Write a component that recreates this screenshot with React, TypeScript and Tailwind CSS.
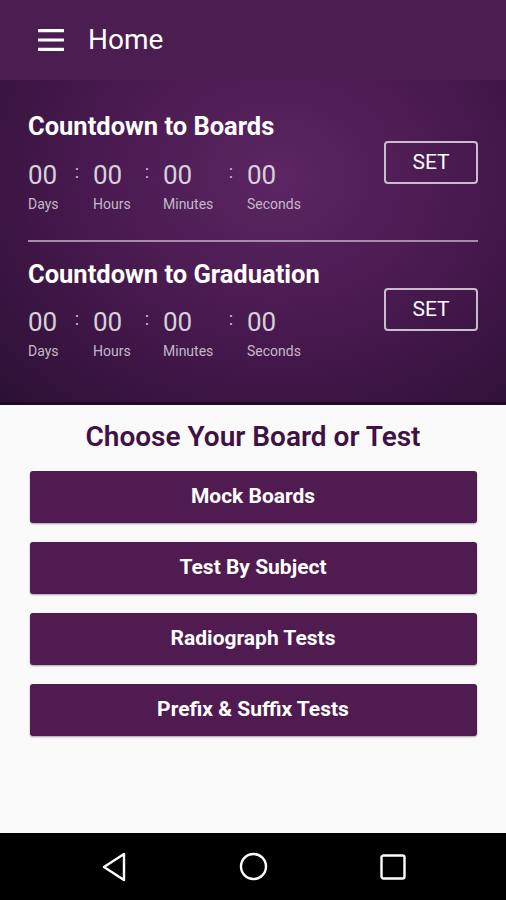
const units = [
  { label: "Days", w: "w-[65px]" },
  { label: "Hours", w: "w-[70px]" },
  { label: "Minutes", w: "w-[84px]" },
  { label: "Seconds", w: "w-[70px]" },
];

function Countdown({ title }: { title: string }) {
  return (
    <div className="flex items-center justify-between">
      <div>
        <h2 className="text-[25.5px] font-bold text-white leading-none">{title}</h2>
        <div className="flex mt-[22px]">
          {units.map((u, i) => (
            <div key={u.label} className={`${u.w} flex flex-col`}>
              <div className="flex items-center text-[26px] leading-none text-[#d8d0dc]">
                <span>00</span>
                {i < 3 && (
                  <span className="ml-auto mr-[14px] text-[18px] -mt-[6px] text-[#c8bccd]">:</span>
                )}
              </div>
              <span className="text-[14px] text-[#c4b8c8] mt-[9px] leading-none">{u.label}</span>
            </div>
          ))}
        </div>
      </div>
      <button className="w-[94px] h-[43px] border-2 border-[#c9bccd] rounded-[4px] text-white text-[21px]">
        SET
      </button>
    </div>
  );
}

const tests = ["Mock Boards", "Test By Subject", "Radiograph Tests", "Prefix & Suffix Tests"];

export default function App() {
  return (
    <div className="w-[506px] h-[900px] flex flex-col bg-[#fafafa] font-['Roboto',sans-serif] overflow-hidden">
      {/* App bar */}
      <div className="h-[80px] bg-[#4b1d50] flex items-center px-[38px] gap-[24px] shrink-0">
        <svg width="26" height="22" viewBox="0 0 26 22" fill="white">
          <rect x="0" y="0" width="26" height="3.2" rx="0.5" />
          <rect x="0" y="9.4" width="26" height="3.2" rx="0.5" />
          <rect x="0" y="18.8" width="26" height="3.2" rx="0.5" />
        </svg>
        <span className="text-white text-[28px] leading-none">Home</span>
      </div>

      {/* Countdown panel */}
      <div className="h-[325px] shrink-0 px-[28px] pt-[34px] bg-[radial-gradient(ellipse_at_55%_30%,#5c2662_0%,#47194e_50%,#2c1034_100%)] border-b-[3px] border-[#1f0a22]">
        <Countdown title="Countdown to Boards" />
        <div className="h-[2px] bg-[#a58daa] mt-[29px] mb-[20px]" />
        <Countdown title="Countdown to Graduation" />
      </div>

      {/* Tests */}
      <div className="flex-1 flex flex-col items-center">
        <h1 className="text-[28px] font-semibold text-[#3f1145] mt-[18px] leading-none">
          Choose Your Board or Test
        </h1>
        <div className="w-[447px] flex flex-col gap-[19px] mt-[20px]">
          {tests.map((t) => (
            <button
              key={t}
              className="h-[52px] bg-[#4f1b51] rounded-[3px] shadow-[0_1px_2px_rgba(0,0,0,0.35)] text-white text-[21px] font-bold"
            >
              {t}
            </button>
          ))}
        </div>
      </div>

      {/* Nav bar */}
      <div className="h-[67px] bg-black flex items-center justify-center gap-[112px] shrink-0">
        <svg width="26" height="30" viewBox="0 0 26 30" fill="none" stroke="white" strokeWidth="2.4" strokeLinejoin="round">
          <path d="M23 2 L3 15 L23 28 Z" />
        </svg>
        <svg width="29" height="29" viewBox="0 0 29 29" fill="none" stroke="white" strokeWidth="2.4">
          <circle cx="14.5" cy="14.5" r="12.5" />
        </svg>
        <svg width="26" height="26" viewBox="0 0 26 26" fill="none" stroke="white" strokeWidth="2.4">
          <rect x="1.5" y="1.5" width="23" height="23" rx="2" />
        </svg>
      </div>
    </div>
  );
}
